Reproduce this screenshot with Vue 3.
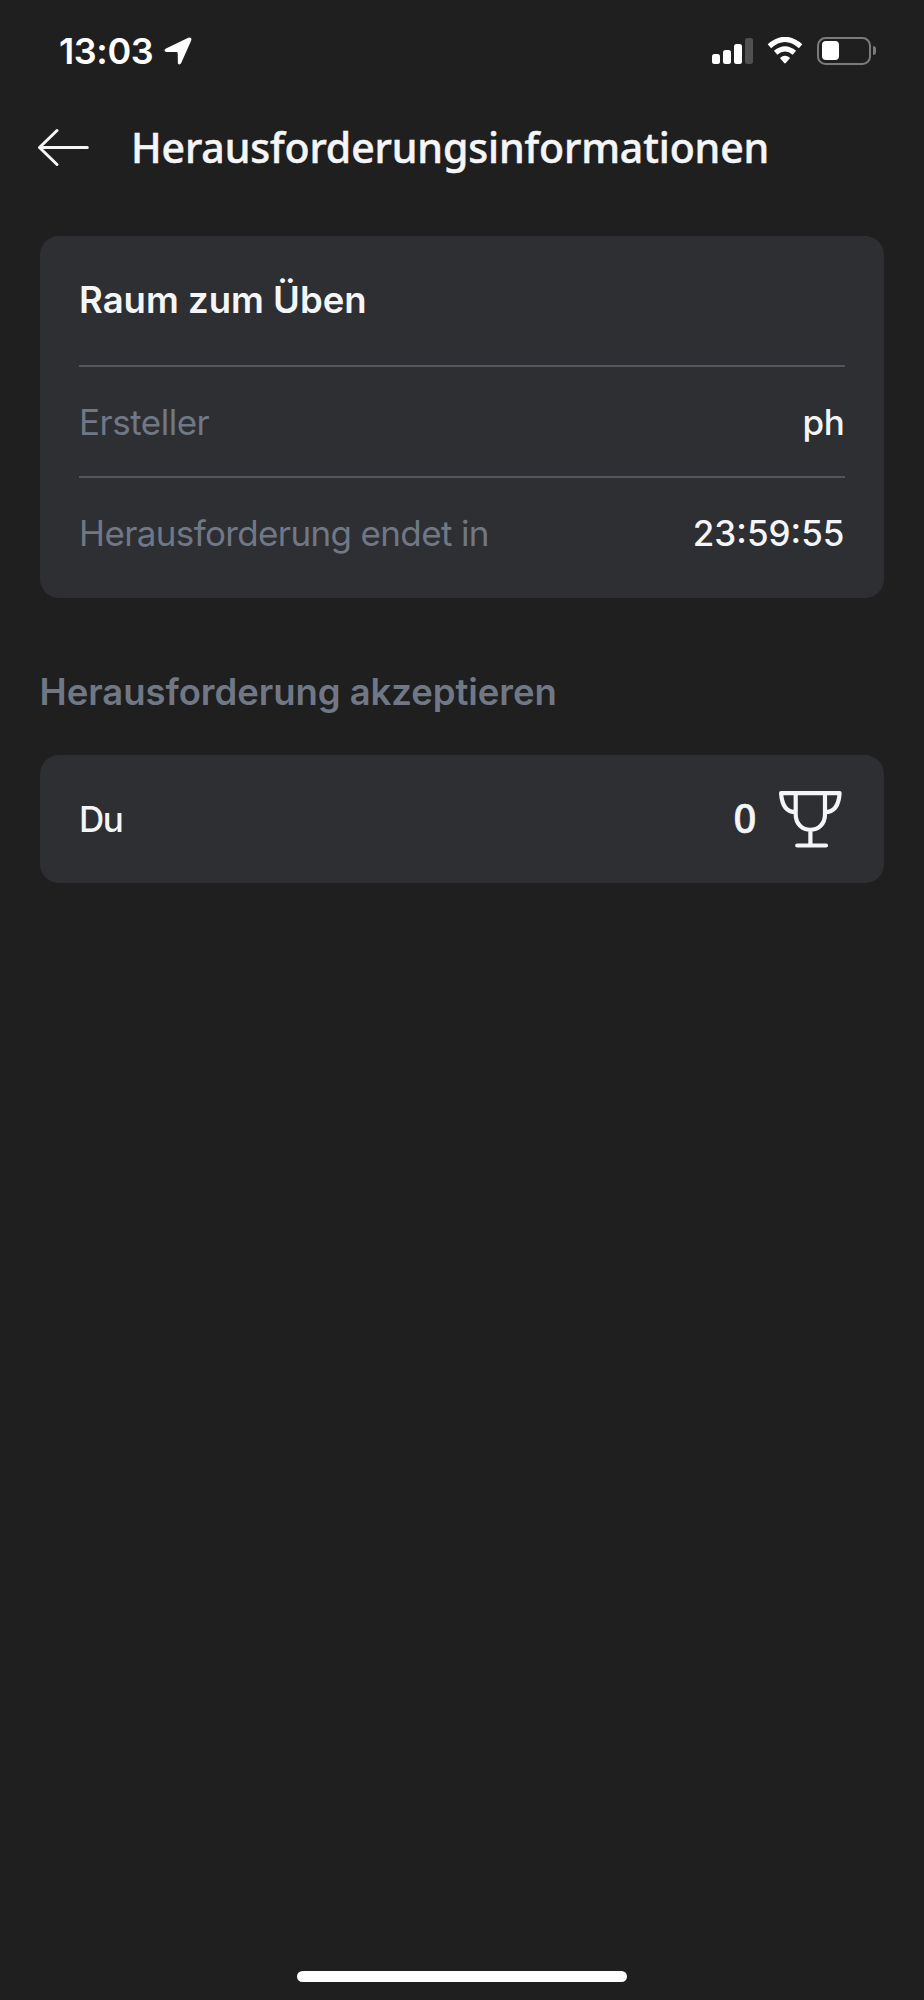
<script setup>
const signal = [10, 14, 20, 26]
</script>

<template>
  <main class="screen">
    <header class="status">
      <div class="time">13:03</div>
      <svg class="loc" viewBox="0 0 28 28"><path d="M2 11.600 24.300 .8Q28.200-.4 27.200 3.400L17.200 26Q15.600 28.600 13.900 26.400L13.700 16.300Q13.600 15 12.300 15H2.200Q-1.200 13.600 2 11.600Z" /></svg>
      <div class="signal"><i v-for="(h, n) in signal" :key="n" :style="{ height: h + 'px' }"></i></div>
      <svg class="wifi" viewBox="0 0 36 27">
        <path d="M2.400 9.200Q18-4.400 33.600 9.200" /><path d="M8.600 15.800Q18 8 27.400 15.800" />
        <path class="dot" d="M12.900 21Q18 16.400 23.100 21L18.800 26Q18 26.900 17.200 26Z" />
      </svg>
      <div class="battery"><b></b></div><em class="cap"></em>
    </header>
    <nav class="bar">
      <svg class="back" viewBox="0 0 52 40"><path d="M20 2.500 2.500 19.500 20 36.500M2.500 19.500H50.300" /></svg>
      <h1>Herausforderungsinformationen</h1>
    </nav>
    <section class="card">
      <div class="row head"><h2>Raum zum Üben</h2></div>
      <div class="row creator"><span class="label">Ersteller</span><span class="value">ph</span></div>
      <div class="row last"><span class="label">Herausforderung endet in</span><span class="value">23:59:55</span></div>
    </section>
    <h3>Herausforderung akzeptieren</h3>
    <section class="card player">
      <span class="value name">Du</span>
      <span class="score">0</span>
      <svg class="trophy" viewBox="0 0 64 58"><path d="M2.100 2.200H60.600Q59.500 21.200 46 21.200M2.100 2.200Q3.200 21.200 16.700 21.200M16.700 2.200V23.500C16.700 43.800 46 43.800 46 23.500V2.200M31.400 39V54.500M18.200 54.500H47" /></svg>
    </section>
    <div class="home"></div>
  </main>
</template>

<style>
html, body { margin: 0; background: #1f1f1f; }
</style>
<style scoped>
.screen { box-sizing: border-box; width: 924px; height: 2000px; display: flex; flex-direction: column; background: #1f1f1f; color: #f4f5f6; font-family: Inter, "Liberation Sans", sans-serif; overflow: hidden; }
h1, h2, h3 { margin: 0; }
.status { display: flex; height: 101px; align-items: center; padding-left: 59px; color: #fff; }
.time { width: 105px; font-size: 36px; font-weight: 600; letter-spacing: -.4px; white-space: nowrap; }
.loc { width: 28px; height: 28px; fill: #fff; }
.signal { display: flex; align-items: flex-end; gap: 3px; margin-left: 520px; height: 26px; }
.signal i { width: 8px; border-radius: 2.5px; background: #fff; }
.signal i:last-child { background: #505050; }
.wifi { width: 36px; height: 27px; margin-left: 14px; fill: none; stroke: #fff; stroke-width: 5.2; }
.wifi .dot { fill: #fff; stroke: none; }
.battery { box-sizing: border-box; width: 54px; height: 28px; margin-left: 14px; padding: 2px; border: 2px solid #7b7b7b; border-radius: 8.5px; }
.battery b { display: block; width: 17px; height: 19px; margin: .5px 0 0 .5px; border-radius: 4px; background: #fff; }
.cap { width: 3px; height: 9px; margin-left: 2px; border-radius: 0 4px 4px 0; background: #7b7b7b; }
.bar { display: flex; align-items: center; height: 93px; padding-left: 37px; }
.back { width: 52px; height: 40px; fill: none; stroke: #f4f5f6; stroke-width: 3; stroke-linecap: round; stroke-linejoin: round; }
h1 { margin: -2px 0 0 42px; font: 500 41px "Noto Sans", sans-serif; letter-spacing: -.13px; -webkit-text-stroke: .5px #f4f5f6; white-space: nowrap; }
.card { box-sizing: border-box; margin: 42px 40px 0 39.5px; padding: 0 39.5px; border-radius: 19px; background: #2e2f33; }
.row { box-sizing: border-box; display: flex; align-items: center; justify-content: space-between; height: 112px; padding-bottom: 2px; border-bottom: 2px solid #54555c; font-size: 35px; white-space: nowrap; }
.row.head { height: 131px; }
.row.creator { height: 111px; padding-bottom: 0; }
.row.last { height: 119.5px; padding-bottom: 9.500px; border: 0; }
h2, h3 { font-size: 36.5px; font-weight: 600; }
.label { color: #707886; letter-spacing: -.63px; }
.value { font-size: 35px; font-weight: 500; }
.creator .label { letter-spacing: -.5px; }
.creator .value { letter-spacing: -.3px; }
.name { letter-spacing: -1.5px; }
h3 { margin: 72px 0 0 39.5px; line-height: 44px; letter-spacing: -.06px; color: #707886; }
.card.player { display: flex; align-items: center; height: 128px; margin-top: 41px; }
.score { margin: -2px 0 0 auto; font: 500 40px "Noto Sans", sans-serif; -webkit-text-stroke: .6px #f4f5f6; }
.trophy { width: 64px; height: 58px; margin: 2px 1.500px 0 22.500px; fill: none; stroke: #f4f5f6; stroke-width: 4.2; stroke-linecap: round; stroke-linejoin: round; }
.home { width: 330px; height: 11px; margin: auto auto 18px; border-radius: 6px; background: #fff; }
</style>
